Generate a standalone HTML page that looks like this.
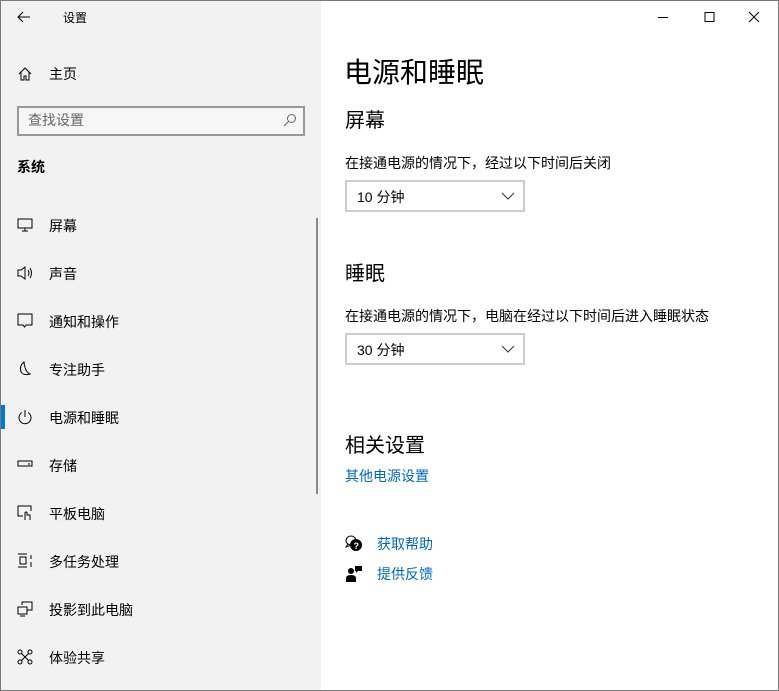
<!DOCTYPE html>
<html><head><meta charset="utf-8"><style>
*{margin:0;padding:0;box-sizing:border-box}
body{width:779px;height:691px;overflow:hidden;background:#fff;font-family:"Liberation Sans","Noto Sans CJK SC",sans-serif;position:relative;color:#000}
.win{position:absolute;left:0;top:0;width:779px;height:691px;border:1px solid #7a7a7a}
.side{position:absolute;left:1px;top:1px;width:320px;height:689px;background:#f2f2f2}
.t{position:absolute;font-size:14px;line-height:16px;white-space:nowrap}
.it{position:absolute;left:49px;font-size:14px}
.ic{position:absolute;left:17px}
.sel{position:absolute;left:1px;top:405px;width:4px;height:24px;background:#0078d7}
.sb{position:absolute;left:316px;top:218px;width:2px;height:276px;background:#8a8a8a}
.search{position:absolute;left:17px;top:106px;width:288px;height:30px;border:2px solid #999;background:#f6f6f6}
.dd{position:absolute;left:345px;width:180px;height:32px;border:2px solid #ccc;background:#fff;font-size:14px}
.dd span{position:absolute;left:10px;top:5px}
.dd svg{position:absolute;right:8px;top:10px}
.link{color:#0067c0;font-size:14px}
</style></head><body>
<div class="win"></div>
<div class="side"></div>
<svg style="position:absolute;left:17px;top:11px" width="14" height="12"><path d="M6 1L1 6L6 11M1 6H13" stroke="#000" fill="none" stroke-width="1"/></svg>
<div class="t" style="left:63px;top:10px;font-size:12px">设置</div>
<svg style="position:absolute;left:18px;top:67px" width="14" height="14"><path d="M1 7L7 1L13 7M3 5V13H6V9H8V13H11V5" stroke="#000" fill="none"/></svg>
<div class="t" style="left:49px;top:66px">主页</div>
<div class="search"></div>
<div class="t" style="left:28px;top:112px;color:#666">查找设置</div>
<svg style="position:absolute;left:283px;top:113px" width="14" height="14"><circle cx="8.5" cy="5.5" r="4" stroke="#666" fill="none"/><path d="M5.5 8.5L1 13" stroke="#666"/></svg>
<div class="t" style="left:17px;top:159px;font-weight:bold">系统</div>

<svg class="ic" style="top:218px" width="16" height="14"><rect x="1" y="1" width="14" height="9" stroke="#000" fill="none"/><path d="M8 10V13M5 13H11" stroke="#000"/></svg>
<div class="t it" style="top:218px">屏幕</div>
<svg class="ic" style="top:265px" width="18" height="16"><path d="M1 5H4L8 2V14L4 11H1Z M11 5Q13 8 11 11 M13 3Q16 8 13 13" stroke="#000" fill="none"/></svg>
<div class="t it" style="top:266px">声音</div>
<svg class="ic" style="top:313px" width="16" height="16"><path d="M1 1H15V12H9L7.5 14L6 12H1Z" stroke="#000" fill="none"/></svg>
<div class="t it" style="top:314px">通知和操作</div>
<svg class="ic" style="top:361px" width="16" height="16"><path d="M7 1Q2 5 4 11Q7 15 13 13Q8 11 7 1Z" stroke="#000" fill="none"/></svg>
<div class="t it" style="top:362px">专注助手</div>
<div class="sel"></div>
<svg class="ic" style="top:409px" width="16" height="16"><path d="M5 3.5A6 6 0 1 0 11 3.5M8 1V8" stroke="#000" fill="none"/></svg>
<div class="t it" style="top:410px">电源和睡眠</div>
<div class="sb"></div>
<svg class="ic" style="top:459px" width="16" height="10"><rect x="1" y="2" width="14" height="5" stroke="#000" fill="none"/><path d="M11 5H13" stroke="#000"/></svg>
<div class="t it" style="top:458px">存储</div>
<svg class="ic" style="top:505px" width="16" height="16"><path d="M6 11H1V1H14V6" stroke="#000" fill="none"/><path d="M8 15V8A1 1 0 0 1 10 8V10H13V15" stroke="#000" fill="none"/></svg>
<div class="t it" style="top:506px">平板电脑</div>
<svg class="ic" style="top:553px" width="16" height="16"><path d="M1 1H10M1 14H10M3 4H9V11H3Z M14 2V6M14 9V14" stroke="#000" fill="none"/></svg>
<div class="t it" style="top:554px">多任务处理</div>
<svg class="ic" style="top:601px" width="16" height="16"><path d="M5 4V1H15V9H10M1 6H10V13H1ZM3 15H8" stroke="#000" fill="none"/></svg>
<div class="t it" style="top:602px">投影到此电脑</div>
<svg class="ic" style="top:649px" width="16" height="16"><circle cx="3" cy="3" r="2" stroke="#000" fill="none"/><circle cx="13" cy="3" r="2" stroke="#000" fill="none"/><circle cx="3" cy="13" r="2" stroke="#000" fill="none"/><circle cx="13" cy="13" r="2" stroke="#000" fill="none"/><path d="M4.5 4.5L11.5 11.5M11.5 4.5L4.5 11.5" stroke="#000"/></svg>
<div class="t it" style="top:650px">体验共享</div>

<svg style="position:absolute;left:655px;top:10px" width="110" height="14"><path d="M3 7.5H13" stroke="#000"/><rect x="50" y="2.5" width="9" height="9" stroke="#000" fill="none"/><path d="M94 2L104 12M104 2L94 12" stroke="#000"/></svg>

<div class="t" style="left:344px;top:56px;font-size:28px;line-height:34px">电源和睡眠</div>
<div class="t" style="left:345px;top:109px;font-size:20px;line-height:24px">屏幕</div>
<div class="t" style="left:345px;top:155px">在接通电源的情况下，经过以下时间后关闭</div>
<div class="dd" style="top:180px"><span>10 分钟</span><svg width="14" height="8"><path d="M1 1L7 7L13 1" stroke="#333" fill="none"/></svg></div>
<div class="t" style="left:345px;top:262px;font-size:20px;line-height:24px">睡眠</div>
<div class="t" style="left:345px;top:308px">在接通电源的情况下，电脑在经过以下时间后进入睡眠状态</div>
<div class="dd" style="top:333px"><span>30 分钟</span><svg width="14" height="8"><path d="M1 1L7 7L13 1" stroke="#333" fill="none"/></svg></div>
<div class="t" style="left:345px;top:434px;font-size:20px;line-height:24px">相关设置</div>
<div class="t link" style="left:345px;top:468px">其他电源设置</div>
<svg style="position:absolute;left:345px;top:535px" width="18" height="18"><ellipse cx="6" cy="5.5" rx="5" ry="4.5" stroke="#000" fill="none"/><path d="M3 9L1 12L5 10.5" stroke="#000" fill="none"/><circle cx="11" cy="10" r="6" fill="#000"/><text x="8.5" y="14" font-size="9" fill="#fff" font-weight="bold" font-family="Liberation Sans">?</text></svg>
<div class="t link" style="left:377px;top:536px">获取帮助</div>
<svg style="position:absolute;left:345px;top:565px" width="18" height="18"><circle cx="6" cy="6" r="3" fill="#000"/><path d="M1 17V13Q1 10 6 10Q11 10 11 13V17Z" fill="#000"/><path d="M10 1H17V6H13L11 8V6H10Z" fill="#000"/></svg>
<div class="t link" style="left:377px;top:566px">提供反馈</div>
</body></html>
